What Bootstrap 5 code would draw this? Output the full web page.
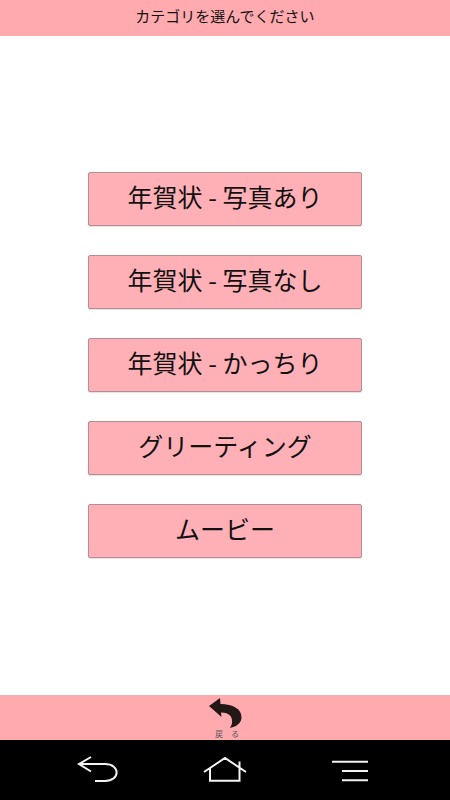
<!DOCTYPE html>
<html lang="ja">
<head>
<meta charset="utf-8">
<title>カテゴリ</title>
<link rel="stylesheet" href="https://cdn.jsdelivr.net/npm/bootstrap@5.3.0/dist/css/bootstrap.min.css">
<style>
html,body{height:100%}
body{font-family:"Noto Sans CJK JP","Liberation Sans",sans-serif;color:#1c1c1c;background:#fff}
.screen{height:800px}
.top-title{height:36px;background:#ffaaaf;font-size:15px;color:#111;padding-bottom:3px}
.cat-area{padding-top:136px}
.cat-btn{width:274px;height:54px;background:#ffb0b6;border:1px solid #b58e92;border-radius:2px;font-size:25px;line-height:1;color:#111;padding:0 0 5px;box-shadow:0 1px 1px rgba(0,0,0,.12)}
.cat-btn:hover,.cat-btn:active{background:#ffb0b6;border-color:#b58e92;color:#111}
.cat-stack{gap:29px}
.back-bar{height:45px;background:#ffaaaf;padding-top:1px}
.back-icon{margin-left:-1px}
.back-label{font-size:8px;line-height:1;letter-spacing:8px;color:#555;margin-top:2px;margin-left:12px}
.sys-bar{height:60px;background:#000}
</style>
</head>
<body>
<div class="screen d-flex flex-column">
  <div class="top-title d-flex align-items-center justify-content-center">カテゴリを選んでください</div>
  <div class="cat-area flex-grow-1">
    <div class="cat-stack d-flex flex-column align-items-center">
      <button type="button" class="btn cat-btn">年賀状 - 写真あり</button>
      <button type="button" class="btn cat-btn">年賀状 - 写真なし</button>
      <button type="button" class="btn cat-btn">年賀状 - かっちり</button>
      <button type="button" class="btn cat-btn">グリーティング</button>
      <button type="button" class="btn cat-btn">ムービー</button>
    </div>
  </div>
  <div class="back-bar d-flex flex-column align-items-center">
    <svg width="36" height="32" viewBox="0 0 36 32" class="d-block back-icon"><path d="M2 10 L13 2 L13.500 8 C26 8 35 13 34.500 22 C34 27 30 30.500 23 32 C25.500 28 26 24 23.500 20 C21.500 17.500 18 16.500 14 16.500 L14.500 21 Z" fill="#231815"/></svg>
    <div class="back-label">戻る</div>
  </div>
  <div class="sys-bar">
    <svg width="450" height="60" viewBox="0 0 450 60" class="d-block">
      <g fill="none" stroke="#f4f4f4" stroke-width="2">
        <path d="M91 17 L79 24 L91 31.500 M79 24 H105 C120.500 24 120.500 41 105 41 H95"/>
        <path d="M204 32 L225 18 L246 32 M210 28.500 V40.700 H239.500 V21.500"/>
        <path d="M332 21.700 H368 M342 31 H368 M342 40.300 H368"/>
      </g>
    </svg>
  </div>
</div>
<script src="https://cdn.jsdelivr.net/npm/bootstrap@5.3.0/dist/js/bootstrap.bundle.min.js"></script>
</body>
</html>
